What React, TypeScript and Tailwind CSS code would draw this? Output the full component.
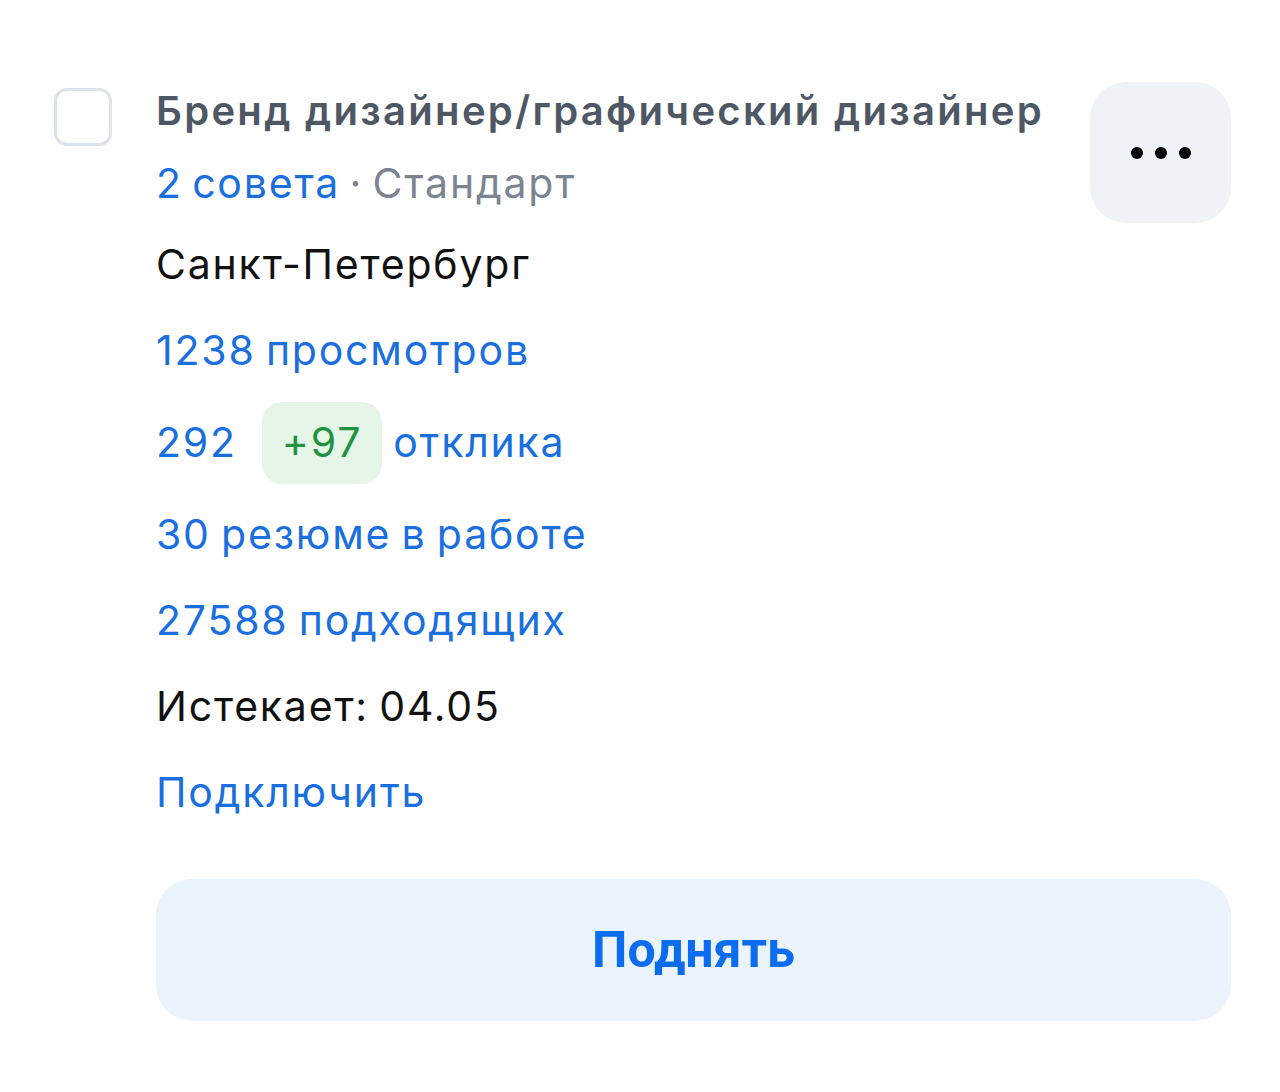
import React from 'react'

/* ── Vacancy card ──────────────────────────────────────────────── */
const BLUE = 'text-[#1a6fe0]'

function MoreButton() {
  return (
    <button
      type="button"
      aria-label="Ещё"
      className="flex h-[141px] w-[141px] shrink-0 items-center justify-center gap-[12px] rounded-[36px] bg-[#eff2f6]"
    >
      <span className="h-[12px] w-[12px] rounded-full bg-black" />
      <span className="h-[12px] w-[12px] rounded-full bg-black" />
      <span className="h-[12px] w-[12px] rounded-full bg-black" />
    </button>
  )
}

function Row({ children, tall = false }: { children: React.ReactNode; tall?: boolean }) {
  return <div className={`flex items-center pb-[2px] ${tall ? 'h-[98px]' : 'h-[86px]'}`}>{children}</div>
}

export default function App() {
  return (
    <div className="min-h-[1092px] w-full bg-white font-['Inter',sans-serif] text-[41px] tracking-[1.8px] [word-spacing:-3px]">
      <div className="flex items-start pl-[54px] pr-[49px] pt-[82px]">
        {/* Checkbox */}
        <div className="mt-[6px] h-[58px] w-[58px] shrink-0 rounded-[13px] border-[3px] border-[#dde3ea]" />

        <div className="ml-[44px] flex-1">
          {/* Header */}
          <div className="flex h-[141px] items-start justify-between">
            <div className="pt-[5px]">
              <div className="whitespace-nowrap text-[40px] font-semibold leading-[48px] tracking-[2.3px] text-[#4e5864] [word-spacing:0px]">
                Бренд дизайнер/графический дизайнер
              </div>
              <div className="mt-[24px] leading-[48px] [word-spacing:-4px]">
                <span className={BLUE}>2 совета</span>
                <span className="text-[#7a8591]"> · Стандарт</span>
              </div>
            </div>
            <MoreButton />
          </div>

          {/* Stats */}
          <Row>
            <span className="text-[#111]">Санкт-Петербург</span>
          </Row>
          <Row>
            <span className={BLUE}>1238 просмотров</span>
          </Row>
          <Row tall>
            <span className={BLUE}>292</span>
            <span className="ml-[25px] flex h-[82px] items-center rounded-[20px] bg-[#e5f6e9] px-[20px] text-[#1f9140]">
              +97
            </span>
            <span className={`ml-[11px] ${BLUE}`}>отклика</span>
          </Row>
          <Row>
            <span className={BLUE}>30 резюме в работе</span>
          </Row>
          <Row>
            <span className={BLUE}>27588 подходящих</span>
          </Row>
          <Row>
            <span className="text-[#111]">Истекает: 04.05</span>
          </Row>
          <Row>
            <span className={BLUE}>Подключить</span>
          </Row>

          {/* Raise button */}
          <button
            type="button"
            className="mt-[42px] flex h-[142px] w-full items-center justify-center rounded-[36px] bg-[#ebf4fd] font-['Roboto',sans-serif] text-[50px] font-bold tracking-normal text-[#0b6cf0] [word-spacing:0px]"
          >
            Поднять
          </button>
        </div>
      </div>
    </div>
  )
}
